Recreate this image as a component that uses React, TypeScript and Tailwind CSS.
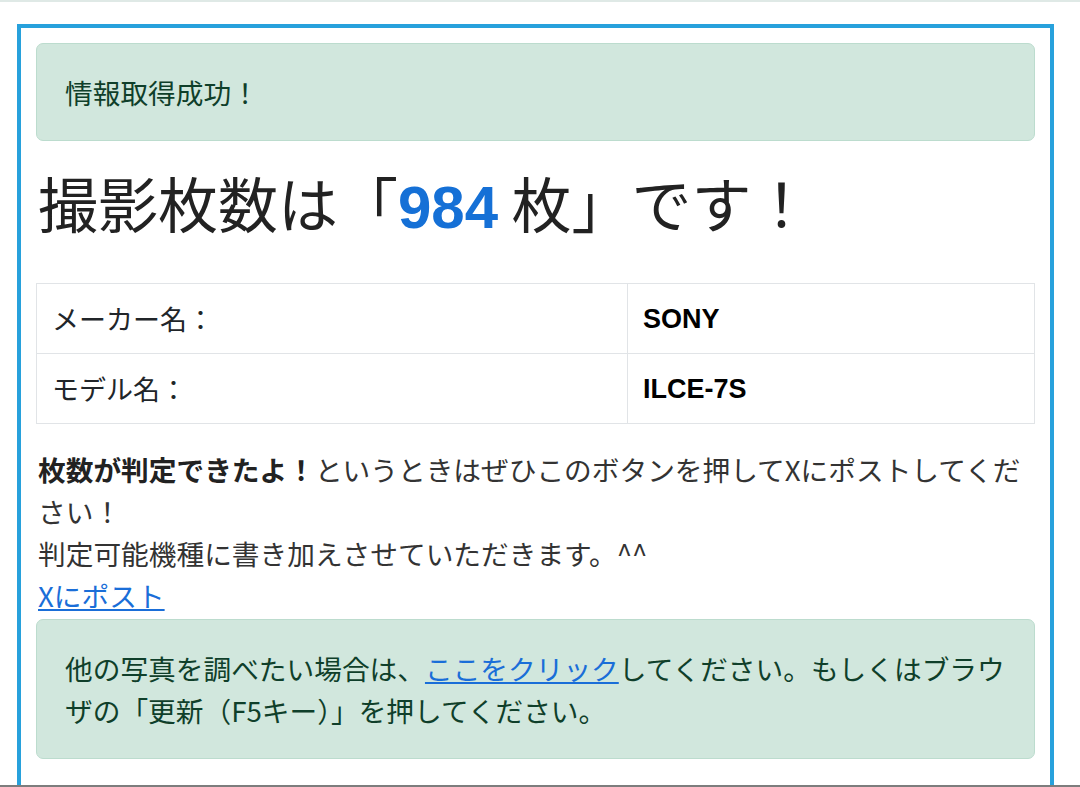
import React from "react";

const jp = "font-['Noto_Sans_CJK_JP',sans-serif]";
const latin = "font-['Liberation_Sans','Noto_Sans_CJK_JP',sans-serif]";

const Alert = ({ children }: { children: React.ReactNode }) => (
  <div className="whitespace-nowrap rounded-[7px] border border-[#bcdcce] bg-[#d1e7dd] px-[28px] py-[27px] text-[#0f3f2a]">
    {children}
  </div>
);

export default function App() {
  return (
    <div
      className={`${jp} flex h-[787px] flex-col overflow-hidden bg-white text-[27.7px] leading-[42px] text-[#212529]`}
    >
      <div className="h-[2px] shrink-0 bg-[#dfe9e6]" />

      <div className="min-h-0 flex-1 overflow-hidden pl-[17px] pr-[26px] pt-[22px]">
        <div className="border-4 border-[#27a1dc] px-[15px] pt-[15px] pb-[80px]">
          <Alert>情報取得成功！</Alert>

          {/* Result heading */}
          <h1 className="mt-[25px] mb-[39px] pl-[2px] text-[60px] font-normal leading-[72px] text-[#222]">
            撮影枚数は「
            <span className={`${latin} font-bold text-[#1570d6]`}>984</span>{" "}
            枚」です！
          </h1>

          <table className="w-full border-collapse text-[27px]">
            <tbody>
              <tr>
                <td className="w-[591px] border border-[#e1e4e7] px-[15px] pt-[14px] pb-[13px]">
                  メーカー名：
                </td>
                <td className={`${latin} border border-[#e1e4e7] px-[15px] pt-[14px] pb-[13px] font-bold text-black`}>
                  SONY
                </td>
              </tr>
              <tr>
                <td className="border border-[#e1e4e7] px-[15px] pt-[14px] pb-[13px]">
                  モデル名：
                </td>
                <td className={`${latin} border border-[#e1e4e7] px-[15px] pt-[14px] pb-[13px] font-bold text-black`}>
                  ILCE-7S
                </td>
              </tr>
            </tbody>
          </table>

          <p className="mt-[24px] whitespace-nowrap pl-[2px] text-[#333]">
            <b className="text-[#222]">枚数が判定できたよ！</b>
            というときはぜひこのボタンを押してXにポストしてくだ
            <br />
            さい！
            <br />
            判定可能機種に書き加えさせていただきます。^^
          </p>
          <div className="pl-[2px]">
            <a href="#" className="text-[#1a6ed8] underline">
              Xにポスト
            </a>
          </div>

          <div className="mt-[3px]">
            <Alert>
              他の写真を調べたい場合は、
              <a href="#" className="text-[#1a6ed8] underline">
                ここをクリック
              </a>
              してください。もしくはブラウ
              <br />
              ザの「更新（F5キー）」を押してください。
            </Alert>
          </div>
        </div>
      </div>

      <div className="h-[2px] shrink-0 bg-[#7d7d7d]" />
    </div>
  );
}
